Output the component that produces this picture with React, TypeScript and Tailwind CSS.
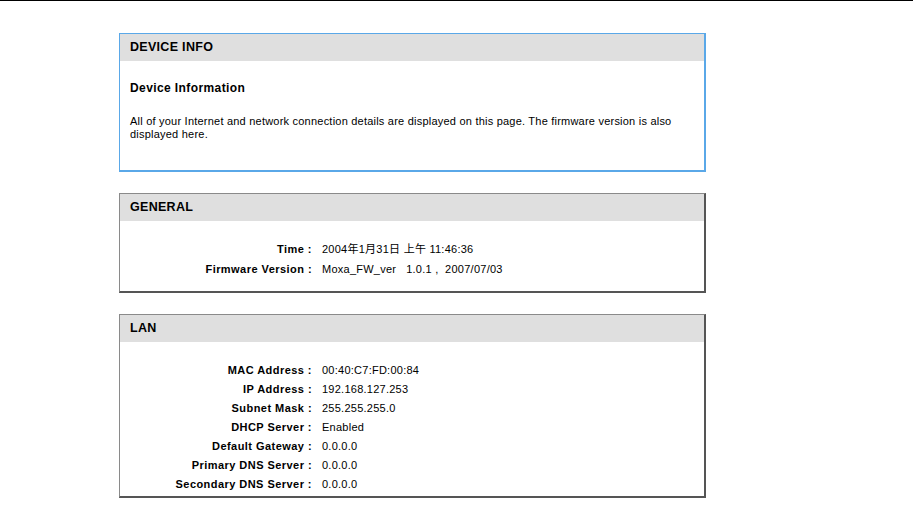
import React from "react";

const font = { fontFamily: '"Liberation Sans", Arial, "Noto Sans CJK SC", sans-serif' };

function Row({ label, value, h }: { label: string; value: string; h: string }) {
  return (
    <div className={`flex items-center ${h}`}>
      <div className="w-[194px] text-right font-bold text-[11px] tracking-[0.45px] text-black pr-[2px]">{label}</div>
      <div className="pl-[8px] text-[11px] tracking-[0.25px] text-black whitespace-pre">{value}</div>
    </div>
  );
}

export default function App() {
  return (
    <div className="w-[913px] h-[510px] bg-white overflow-hidden" style={font}>
      <div className="h-[1px] bg-black w-full" />
      <div className="pl-[119px] pt-[32px] flex flex-col">
        <div className="w-[587px] h-[139px] border border-[#5aa8e8] border-r-2 border-b-2 flex flex-col">
          <div className="h-[27px] bg-[#dfdfdf] flex items-center pl-[10px] font-bold text-[12.5px] text-black tracking-[0.3px]">DEVICE INFO</div>
          <div className="pl-[10px] pt-[18px] font-bold text-[12px] tracking-[0.4px] text-black">Device Information</div>
          <div className="pl-[10px] pt-[18px] pr-[20px] text-[11px] tracking-[0.22px] leading-[13px] text-black">
            All of your Internet and network connection details are displayed on this page. The firmware version is also displayed here.
          </div>
        </div>
        <div className="mt-[21px] w-[587px] h-[100px] border border-[#8a8a8a] border-r-2 border-b-2 border-r-[#555] border-b-[#555] flex flex-col">
          <div className="h-[27px] bg-[#dfdfdf] flex items-center pl-[10px] font-bold text-[12.5px] text-black tracking-[0.3px]">GENERAL</div>
          <div className="pt-[18px] flex flex-col">
            <Row h="h-[20px]" label="Time :" value="2004年1月31日 上午 11:46:36" />
            <Row h="h-[20px]" label="Firmware Version :" value="Moxa_FW_ver   1.0.1 ,  2007/07/03" />
          </div>
        </div>
        <div className="mt-[21px] w-[587px] h-[184px] border border-[#8a8a8a] border-r-2 border-b-2 border-r-[#555] border-b-[#555] flex flex-col">
          <div className="h-[27px] bg-[#dfdfdf] flex items-center pl-[10px] font-bold text-[12.5px] text-black tracking-[0.3px]">LAN</div>
          <div className="pt-[19px] flex flex-col">
            <Row h="h-[19px]" label="MAC Address :" value="00:40:C7:FD:00:84" />
            <Row h="h-[19px]" label="IP Address :" value="192.168.127.253" />
            <Row h="h-[19px]" label="Subnet Mask :" value="255.255.255.0" />
            <Row h="h-[19px]" label="DHCP Server :" value="Enabled" />
            <Row h="h-[19px]" label="Default Gateway :" value="0.0.0.0" />
            <Row h="h-[19px]" label="Primary DNS Server :" value="0.0.0.0" />
            <Row h="h-[19px]" label="Secondary DNS Server :" value="0.0.0.0" />
          </div>
        </div>
      </div>
    </div>
  );
}
